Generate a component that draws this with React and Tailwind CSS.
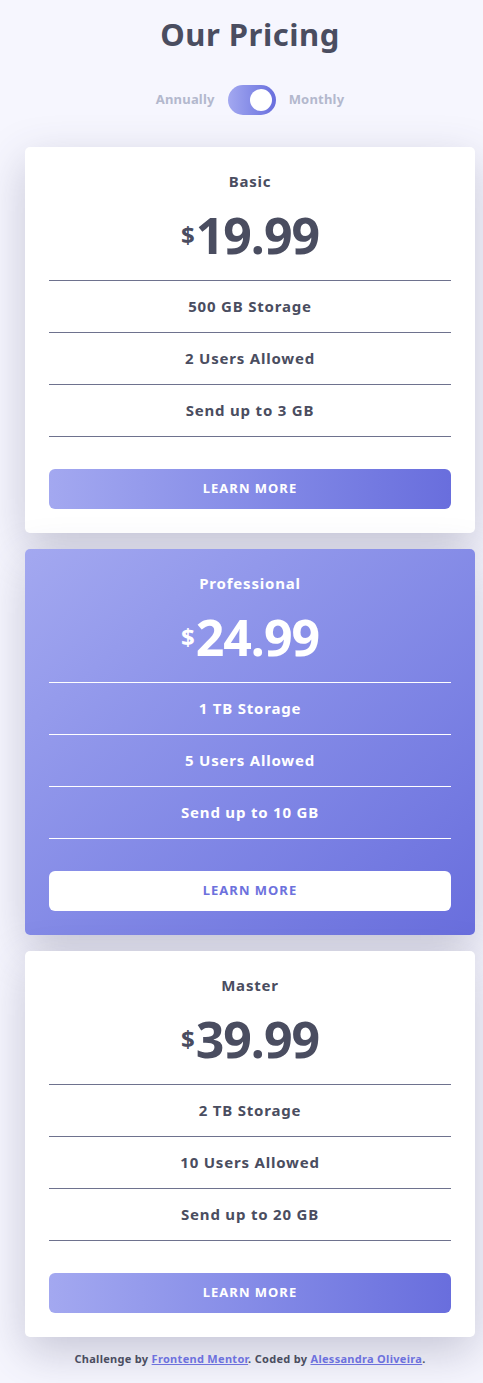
import React from "react";

const font = { fontFamily: '"Noto Sans", "DejaVu Sans", sans-serif' };

const plans = [
  { name: "Basic", price: "19.99", features: ["500 GB Storage", "2 Users Allowed", "Send up to 3 GB"], featured: false },
  { name: "Professional", price: "24.99", features: ["1 TB Storage", "5 Users Allowed", "Send up to 10 GB"], featured: true },
  { name: "Master", price: "39.99", features: ["2 TB Storage", "10 Users Allowed", "Send up to 20 GB"], featured: false },
];

function Card({ plan }) {
  const f = plan.featured;
  return (
    <div
      className={
        "rounded-[5px] px-6 pt-[22px] pb-6 flex flex-col shadow-[0_15px_45px_rgba(60,62,100,0.26)] " +
        (f ? "bg-gradient-to-br from-[#a3a8f0] to-[#696edd] text-white" : "bg-white text-[#4a4d60]")
      }
    >
      <div className="text-center text-[15px] font-bold leading-6 tracking-[0.8px]">{plan.name}</div>
      <div className="flex items-center justify-center h-[76px] mt-[4px] mb-[7px]">
        <span className="text-[24px] font-bold leading-none mr-[1px]">$</span>
        <span className="text-[50px] font-bold leading-none tracking-[-1px]">{plan.price}</span>
      </div>
      <div className={"border-t " + (f ? "border-white" : "border-[#6e728e]")}>
        {plan.features.map((ft) => (
          <div
            key={ft}
            className={
              "h-[52px] flex items-center justify-center text-[15px] font-bold border-b tracking-[0.8px] " +
              (f ? "border-white" : "border-[#6e728e]")
            }
          >
            {ft}
          </div>
        ))}
      </div>
      <button
        className={
          "mt-8 h-10 rounded-[6px] text-[13px] font-bold tracking-[1px] " +
          (f ? "bg-white text-[#6d71dd]" : "bg-gradient-to-r from-[#a3a8f0] to-[#696edd] text-white")
        }
        style={font}
      >
        LEARN MORE
      </button>
    </div>
  );
}

export default function App() {
  return (
    <div className="w-[500px] min-h-[1383px] bg-[#f6f6fe] flex flex-col items-center" style={font}>
      <h1 className="mt-[14px] text-[31px] font-bold text-[#4a4d60] leading-10 tracking-[0.5px]">Our Pricing</h1>
      <div className="mt-[31px] flex items-center gap-[13px]">
        <span className="text-[13px] font-bold text-[#b3b8cd] tracking-[0.2px]">Annually</span>
        <div className="w-[48px] h-[30px] rounded-full bg-gradient-to-r from-[#a3a8f0] to-[#696edd] flex items-center justify-end pr-[4px]">
          <div className="w-[22px] h-[22px] rounded-full bg-white" />
        </div>
        <span className="text-[13px] font-bold text-[#b3b8cd] tracking-[0.2px]">Monthly</span>
      </div>
      <div className="mt-[32px] w-[450px] flex flex-col gap-4">
        {plans.map((p) => (
          <Card key={p.name} plan={p} />
        ))}
      </div>
      <p className="mt-[14px] text-[11px] font-bold text-[#4a4d60] tracking-[0.3px]">
        Challenge by <a className="text-[#6d71dd] underline" href="#">Frontend Mentor</a>. Coded by{" "}
        <a className="text-[#6d71dd] underline" href="#">Alessandra Oliveira</a>.
      </p>
    </div>
  );
}
